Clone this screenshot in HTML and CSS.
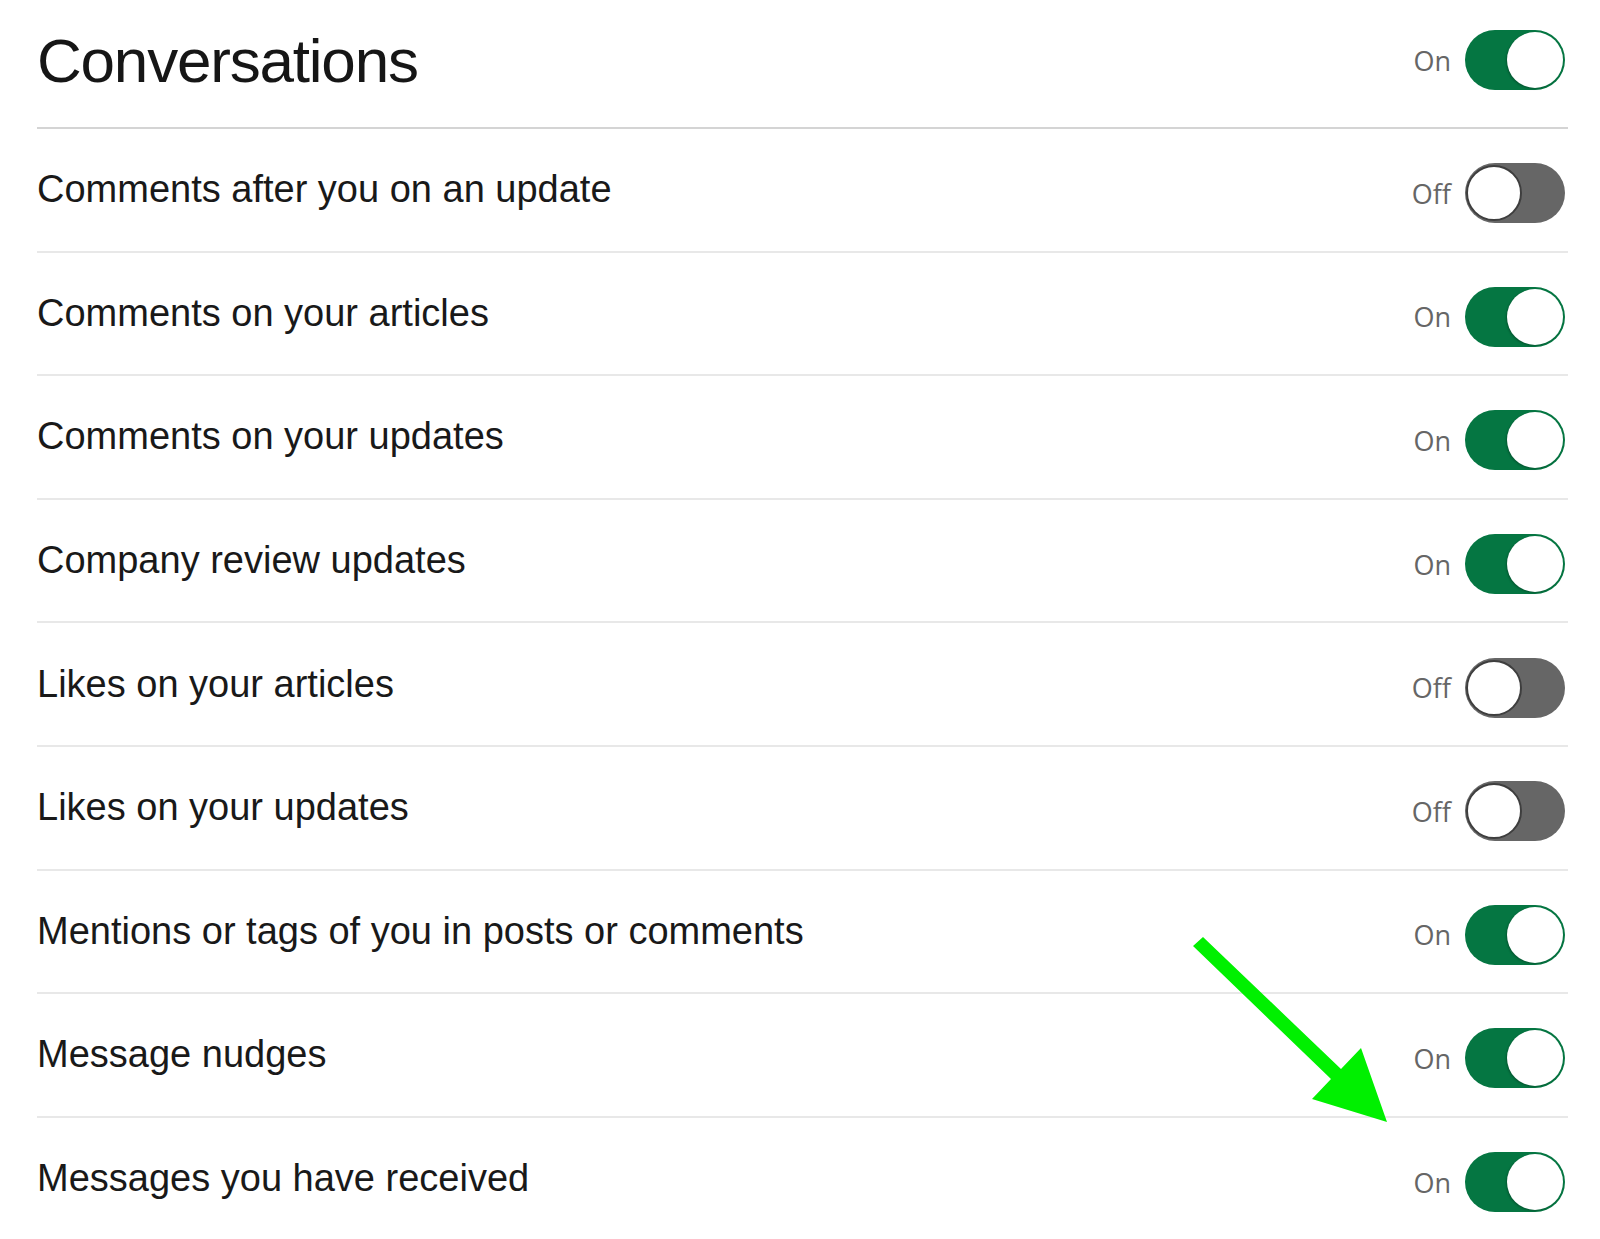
FILE: index.html
```html
<!DOCTYPE html>
<html lang="en">
<head>
    <meta charset="UTF-8">
    <meta name="viewport" content="width=device-width, initial-scale=1.0">
    <title>Conversations</title>
    <link rel="stylesheet" href="styles.css">
</head>
<body>
    <div class="container">
        <div class="header">
            <h1>Conversations</h1>
            <div class="status">
                <span class="state">On</span>
                <span class="toggle on"><span class="knob"></span></span>
            </div>
        </div>

        <div class="row">
            <span class="label">Comments after you on an update</span>
            <div class="status">
                <span class="state">Off</span>
                <span class="toggle off"><span class="knob"></span></span>
            </div>
        </div>
        <div class="row">
            <span class="label">Comments on your articles</span>
            <div class="status">
                <span class="state">On</span>
                <span class="toggle on"><span class="knob"></span></span>
            </div>
        </div>
        <div class="row">
            <span class="label">Comments on your updates</span>
            <div class="status">
                <span class="state">On</span>
                <span class="toggle on"><span class="knob"></span></span>
            </div>
        </div>
        <div class="row">
            <span class="label">Company review updates</span>
            <div class="status">
                <span class="state">On</span>
                <span class="toggle on"><span class="knob"></span></span>
            </div>
        </div>
        <div class="row">
            <span class="label">Likes on your articles</span>
            <div class="status">
                <span class="state">Off</span>
                <span class="toggle off"><span class="knob"></span></span>
            </div>
        </div>
        <div class="row">
            <span class="label">Likes on your updates</span>
            <div class="status">
                <span class="state">Off</span>
                <span class="toggle off"><span class="knob"></span></span>
            </div>
        </div>
        <div class="row">
            <span class="label">Mentions or tags of you in posts or comments</span>
            <div class="status">
                <span class="state">On</span>
                <span class="toggle on"><span class="knob"></span></span>
            </div>
        </div>
        <div class="row">
            <span class="label">Message nudges</span>
            <div class="status">
                <span class="state">On</span>
                <span class="toggle on"><span class="knob"></span></span>
            </div>
        </div>
        <div class="row last">
            <span class="label">Messages you have received</span>
            <div class="status">
                <span class="state">On</span>
                <span class="toggle on"><span class="knob"></span></span>
            </div>
        </div>
    </div>

    <!-- annotation arrow drawn over the list -->
    <svg class="arrow" width="1600" height="1239" viewBox="0 0 1600 1239">
        <polygon points="1193,946 1203,937 1341,1069 1361,1048 1387,1122 1312,1099 1331,1079" fill="#00f000"/>
    </svg>
</body>
</html>
```

FILE: styles.css
```css
body {
    font-family: "Liberation Sans", Arial, sans-serif;
    background-color: #fff;
    color: #1a1a1a;
    margin: 0;
    padding: 0;
}
.container {
    padding: 0 32px 0 37px;
}
.header {
    display: flex;
    justify-content: space-between;
    align-items: center;
    height: 120px;
    padding-bottom: 7px;
    border-bottom: 2px solid #d4d4d4;
}
h1 {
    margin: 0;
    font-size: 62px;
    font-weight: normal;
    letter-spacing: -1.2px;
    color: #161616;
}
.row {
    display: flex;
    justify-content: space-between;
    align-items: center;
    height: 121.6px;
    border-bottom: 2px solid #e8e8e8;
}
.row.last {
    border-bottom: none;
}
.label {
    font-size: 38px;
    color: #191919;
}
.status {
    display: flex;
    align-items: center;
    gap: 14px;
    margin-right: 3px;
}
.row .status {
    margin-top: 7px;
}
.state {
    font-family: "Open Sans", sans-serif;
    font-size: 27px;
    color: #666;
}
.toggle {
    position: relative;
    display: block;
    width: 100px;
    height: 60px;
    border-radius: 30px;
    box-sizing: border-box;
}
.toggle.on {
    background-color: #057642;
}
.toggle.off {
    background-color: #666;
}
.knob {
    position: absolute;
    top: 2px;
    width: 56px;
    height: 56px;
    border-radius: 50%;
    background-color: #fff;
    box-sizing: border-box;
}
.toggle.on .knob {
    right: 2px;
    box-shadow: -1px 1px 2px rgba(0, 0, 0, 0.25);
}
.toggle.off .knob {
    left: 1px;
    border: 2px solid #3e3e3e;
}
.arrow {
    position: absolute;
    top: 0;
    left: 0;
    pointer-events: none;
}
```
